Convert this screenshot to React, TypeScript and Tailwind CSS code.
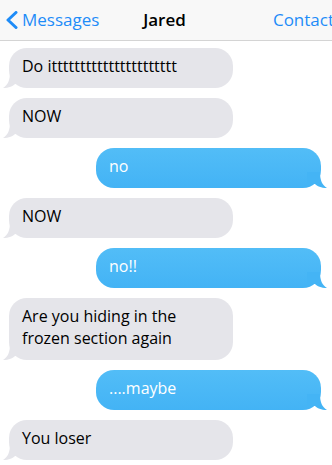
import React from 'react';

type Msg = { text: string; mine: boolean };

const messages: Msg[] = [
  { text: 'Do itttttttttttttttttttttt', mine: false },
  { text: 'NOW', mine: false },
  { text: 'no', mine: true },
  { text: 'NOW', mine: false },
  { text: 'no!!', mine: true },
  { text: 'Are you hiding in the frozen section again', mine: false },
  { text: '....maybe', mine: true },
  { text: 'You loser', mine: false },
];

function Bubble({ msg }: { msg: Msg }) {
  if (msg.mine) {
    return (
      <div className="flex justify-end pr-[11px]">
        <div className="relative w-[225px] rounded-[18px] bg-gradient-to-b from-[#52bdf7] to-[#43b3f5] px-[13px] pt-[7px] pb-[11px] text-[16px] leading-[22px] text-white">
          <svg className="absolute right-[-6px] bottom-0" width="20" height="16" viewBox="0 0 20 16">
            <path d="M13 0 C13 8 15 13 20 16 C14 16 10 14 8 12 L0 12 L0 0 Z" fill="#44b4f5" />
          </svg>
          <span className="relative">{msg.text}</span>
        </div>
      </div>
    );
  }
  return (
    <div className="flex justify-start pl-[9px]">
      <div className="relative w-[224px] rounded-[18px] bg-[#e5e5ea] px-[13px] pt-[7px] pb-[11px] text-[16px] leading-[22px] text-black">
        <svg className="absolute left-[-6px] bottom-0" width="20" height="16" viewBox="0 0 20 16">
          <path d="M7 0 C7 8 5 13 0 16 C6 16 10 14 12 12 L20 12 L20 0 Z" fill="#e5e5ea" />
        </svg>
        <span className="relative">{msg.text}</span>
      </div>
    </div>
  );
}

export default function App() {
  return (
    <div className="w-[332px] h-[465px] overflow-hidden bg-white font-['Open_Sans',sans-serif]">
      {/* Top bar */}
      <div className="flex h-[41px] items-center justify-between border-b border-[#d4d4d4] bg-[#f8f8f8] pl-[5px] text-[17px]">
        <div className="flex w-[120px] items-center gap-[4px] text-[#1e8cf8]">
          <svg width="13" height="18" viewBox="0 0 13 18">
            <path d="M11 1.5 L3 9 L11 16.5" stroke="#1e8cf8" strokeWidth="3" fill="none" strokeLinecap="round" strokeLinejoin="round" />
          </svg>
          <span>Messages</span>
        </div>
        <div className="mr-[8px] font-semibold text-black">Jared</div>
        <div className="flex w-[120px] justify-end whitespace-nowrap text-[#1e8cf8]">
          <span className="mr-[-2px]">Contact</span>
        </div>
      </div>

      {/* Conversation */}
      <div className="flex flex-col gap-[10px] pt-[7px]">
        {messages.map((m, i) => (
          <Bubble key={i} msg={m} />
        ))}
      </div>
    </div>
  );
}
